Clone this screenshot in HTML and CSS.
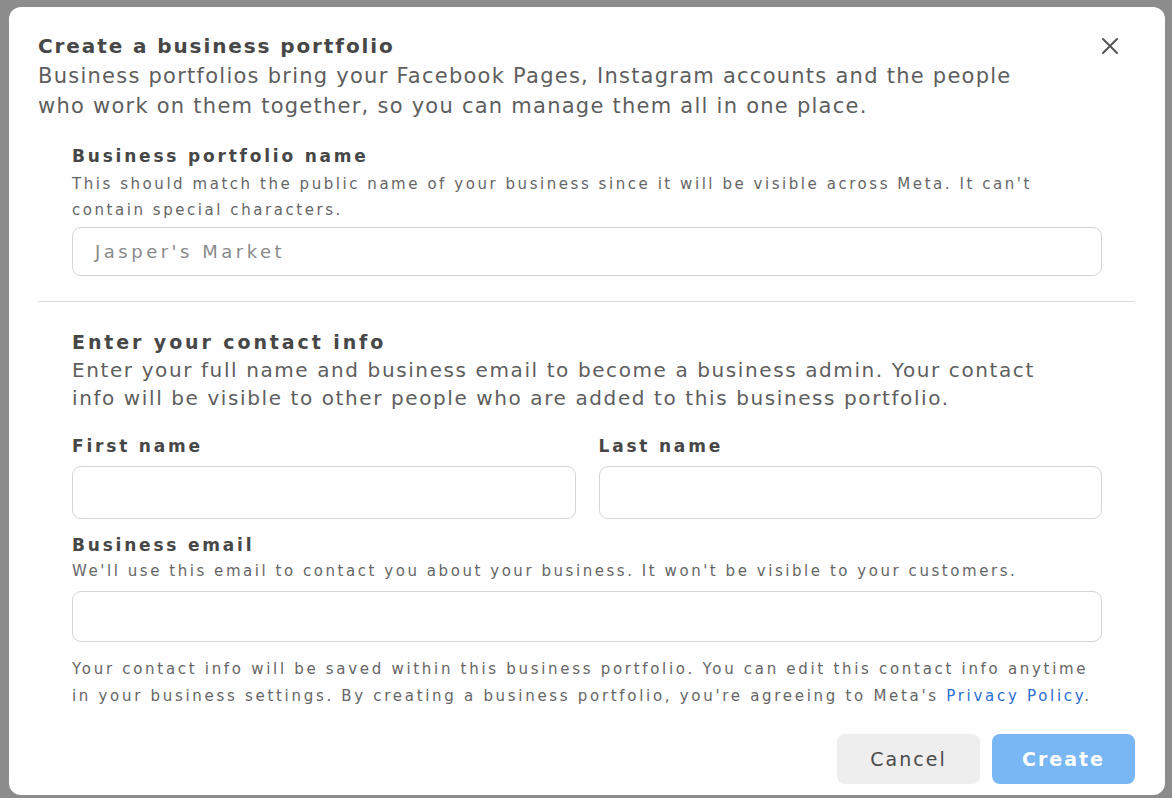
FILE: index.html
```html
<!DOCTYPE html>
<html lang="en">
<head>
<meta charset="utf-8">
<title>Create a business portfolio</title>
<link rel="stylesheet" href="styles.css">
</head>
<body>
<div class="dialog">
  <div class="header">
    <div class="header-text">
      <h1 class="title">Create a business portfolio</h1>
      <p class="intro">Business portfolios bring your Facebook Pages, Instagram accounts and the people who work on them together, so you can manage them all in one place.</p>
    </div>
    <button class="close" aria-label="Close">
      <svg width="18" height="18" viewBox="0 0 18 18"><path d="M2 2 L16 16 M16 2 L2 16" stroke="#555" stroke-width="2" stroke-linecap="round" fill="none"/></svg>
    </button>
  </div>

  <div class="section section-name">
    <div class="label">Business portfolio name</div>
    <p class="hint">This should match the public name of your business since it will be visible across Meta. It can't contain special characters.</p>
    <div class="input input-name"><span class="placeholder">Jasper's Market</span></div>
  </div>

  <div class="section section-contact">
    <h2 class="heading">Enter your contact info</h2>
    <p class="contact-desc">Enter your full name and business email to become a business admin. Your contact info will be visible to other people who are added to this business portfolio.</p>
    <div class="name-row">
      <div class="field">
        <div class="label">First name</div>
        <div class="input input-tall"></div>
      </div>
      <div class="field">
        <div class="label">Last name</div>
        <div class="input input-tall"></div>
      </div>
    </div>
    <div class="label label-email">Business email</div>
    <p class="hint">We'll use this email to contact you about your business. It won't be visible to your customers.</p>
    <div class="input input-email"></div>
    <p class="footnote">Your contact info will be saved within this business portfolio. You can edit this contact info anytime in your business settings. By creating a business portfolio, you're agreeing to Meta's <a class="link" href="#">Privacy Policy</a>.</p>
    <div class="actions">
      <button class="btn btn-cancel">Cancel</button>
      <button class="btn btn-create">Create</button>
    </div>
  </div>
</div>
</body>
</html>
```
FILE: styles.css
```css
* { box-sizing: border-box; }
html, body { margin: 0; padding: 0; }
body {
  background: #8c8c8c;
  font-family: "DejaVu Sans", "Noto Sans", sans-serif;
  height: 798px;
  overflow: hidden;
}
.dialog {
  margin: 7px 7px 0 9px;
  height: 788px;
  background: #fefefe;
  border-radius: 12px;
  padding: 24px 30px 0 29px;
}
.header {
  display: flex;
  align-items: flex-start;
}
.header-text { flex: 1; }
.title {
  margin: 0;
  font-size: 20px;
  font-weight: bold;
  line-height: 30px;
  letter-spacing: 1.9px;
  color: #474747;
}
.intro {
  margin: 0;
  font-size: 21px;
  line-height: 30px;
  letter-spacing: 1.25px;
  color: #5e5e5e;
  width: 1010px;
}
.close {
  border: 0;
  background: none;
  padding: 0;
  margin: 6px 16px 0 0;
  width: 18px;
  height: 18px;
  cursor: pointer;
}
.close svg { display: block; }
.section {
  padding: 0 33px 0 34px;
}
.section-name {
  padding-top: 23px;
  padding-bottom: 25px;
  border-bottom: 1px solid #dcdcdc;
}
.label {
  font-size: 17px;
  font-weight: bold;
  line-height: 24px;
  letter-spacing: 2.8px;
  color: #474747;
}
.hint {
  margin: 3px 0 0;
  font-size: 15px;
  line-height: 26px;
  letter-spacing: 2.55px;
  color: #666;
}
.input {
  border: 1px solid #d5d5d5;
  border-radius: 9px;
  background: #fff;
}
.input-name {
  margin-top: 4px;
  height: 49px;
  display: flex;
  align-items: center;
  padding-left: 22px;
}
.placeholder {
  font-size: 18px;
  letter-spacing: 3.5px;
  color: #8a8a8a;
}
.section-contact { padding-top: 26px; }
.heading {
  margin: 0;
  font-size: 19px;
  font-weight: bold;
  line-height: 28px;
  letter-spacing: 2.9px;
  color: #474747;
}
.contact-desc {
  margin: 0;
  font-size: 20px;
  line-height: 28px;
  letter-spacing: 1.6px;
  color: #5e5e5e;
  width: 1000px;
}
.name-row {
  display: grid;
  grid-template-columns: 1fr 1fr;
  column-gap: 23px;
  margin-top: 22px;
}
.input-tall {
  margin-top: 8px;
  height: 53px;
}
.label-email { margin-top: 14px; }
.label-email + .hint { margin-top: 1px; }
.input-email {
  margin-top: 7px;
  height: 51px;
}
.footnote {
  margin: 14px 0 0;
  font-size: 15px;
  line-height: 27px;
  letter-spacing: 2.7px;
  color: #666;
}
.link { color: #2c6fcf; text-decoration: none; }
.actions {
  display: flex;
  justify-content: flex-end;
  gap: 12px;
  margin-top: 24px;
  margin-right: -33px;
}
.btn {
  width: 143px;
  height: 50px;
  border: 0;
  border-radius: 8px;
  font-family: inherit;
  font-size: 19px;
  letter-spacing: 2px;
}
.btn-cancel { background: #eeeeee; color: #4a4a4a; }
.btn-create { background: #78b6f4; color: #fff; font-weight: bold; }
```
